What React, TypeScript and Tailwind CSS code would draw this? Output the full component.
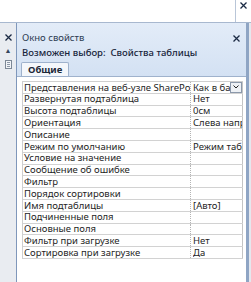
const ROWS: [string, string][] = [
  ["Представления на веб-узле SharePoint", "Как в базе данных"],
  ["Развернутая подтаблица", "Нет"],
  ["Высота подтаблицы", "0см"],
  ["Ориентация", "Слева направо"],
  ["Описание", ""],
  ["Режим по умолчанию", "Режим таблицы"],
  ["Условие на значение", ""],
  ["Сообщение об ошибке", ""],
  ["Фильтр", ""],
  ["Порядок сортировки", ""],
  ["Имя подтаблицы", "[Авто]"],
  ["Подчиненные поля", ""],
  ["Основные поля", ""],
  ["Фильтр при загрузке", "Нет"],
  ["Сортировка при загрузке", "Да"],
];

function Cross({ className }: { className?: string }) {
  return (
    <svg width="7" height="7" viewBox="0 0 7 7" className={className} aria-hidden>
      <path d="M0.5 0.5L6.5 6.5M6.5 0.5L0.5 6.5" stroke="#1b2a44" strokeWidth="1.3" />
    </svg>
  );
}

export default function App() {
  return (
    <div
      className="relative w-[251px] h-[282px] overflow-hidden bg-white text-[#1e1e1e] text-[9.5px] leading-none"
      style={{ fontFamily: '"Noto Sans", "Open Sans", sans-serif' }}
    >
      {/* верхняя панель */}
      <div className="flex h-[23px] border-b border-[#a8b8cf]">
        <div className="flex-1" />
        <div className="w-[16px] border-l border-[#b9c6d8] flex items-start justify-center pt-[2px]">
          <Cross />
        </div>
      </div>

      <div className="flex h-[259px]">
        {/* левая свернутая панель */}
        <div className="w-[17px] shrink-0 bg-[#e9ecf1] border-r border-[#7f97bb] flex flex-col items-center pt-[11px] gap-[6px]">
          <Cross />
          <span className="text-[7px] text-[#34445c] leading-none">▲</span>
          <div className="w-[7px] h-[9px] border border-[#7d8896] bg-[#f2f4f7] flex flex-col justify-center gap-[1px] px-[1px]">
            <div className="h-px bg-[#8d98a8]" />
            <div className="h-px bg-[#8d98a8]" />
            <div className="h-px bg-[#8d98a8]" />
          </div>
        </div>

        {/* окно свойств */}
        <div className="flex-1 min-w-0 flex flex-col border-r-[3px] border-[#8fa5c4]">
          <div className="bg-gradient-to-b from-[#e3ecf8] to-[#d3e1f3] pt-[9px]">
            <div className="flex items-center justify-between pl-[5px] pr-[6px] h-[12px]">
              <span className="text-[#2c3a50]">Окно свойств</span>
              <Cross />
            </div>
            <div className="pl-[5px] mt-[3px] h-[12px] flex items-center font-medium text-[#17243a] whitespace-nowrap">
              Возможен выбор:&nbsp;&nbsp;Свойства таблицы
            </div>
            <div className="flex pl-[4px] mt-[3px] border-b border-[#9fb2cc]">
              <div className="h-[14px] px-[6px] flex items-center bg-[#f4f7fb] border border-b-0 border-[#9fb2cc] rounded-t-[2px] font-bold text-[#1d2838]">
                Общие
              </div>
            </div>
          </div>

          <div className="flex-1 bg-white pl-[5px] pr-[3px] pt-[4px]">
            <div className="border-t border-l border-[#cfcfcf]">
              {ROWS.map(([label, value], i) => (
                <div key={label} className="flex h-[11.8px] border-b border-[#d2d2d2]">
                  <div className="w-[168px] shrink-0 border-r border-dotted border-[#b4b4b4] pl-[1px] whitespace-nowrap overflow-hidden flex items-center">
                    {label}
                  </div>
                  <div className="flex-1 min-w-0 border-r border-[#c4c4c4] pl-[2px] flex items-center">
                    <span className={i === 0 ? "min-w-0 w-[38px] overflow-hidden whitespace-nowrap" : "min-w-0 overflow-hidden whitespace-nowrap"}>
                      {value}
                    </span>
                    {i === 0 && (
                      <div className="ml-auto self-stretch w-[12px] shrink-0 bg-[#eef1f5] border border-[#8c99ab] flex items-center justify-center">
                        <svg width="6" height="4" viewBox="0 0 6 4" aria-hidden>
                          <path d="M0.5 0.5L3 3L5.5 0.5" stroke="#222" strokeWidth="1" fill="none" />
                        </svg>
                      </div>
                    )}
                  </div>
                </div>
              ))}
            </div>
          </div>
        </div>

        <div className="w-[2px] shrink-0 bg-[#e4e8ee]" />
      </div>
    </div>
  );
}
